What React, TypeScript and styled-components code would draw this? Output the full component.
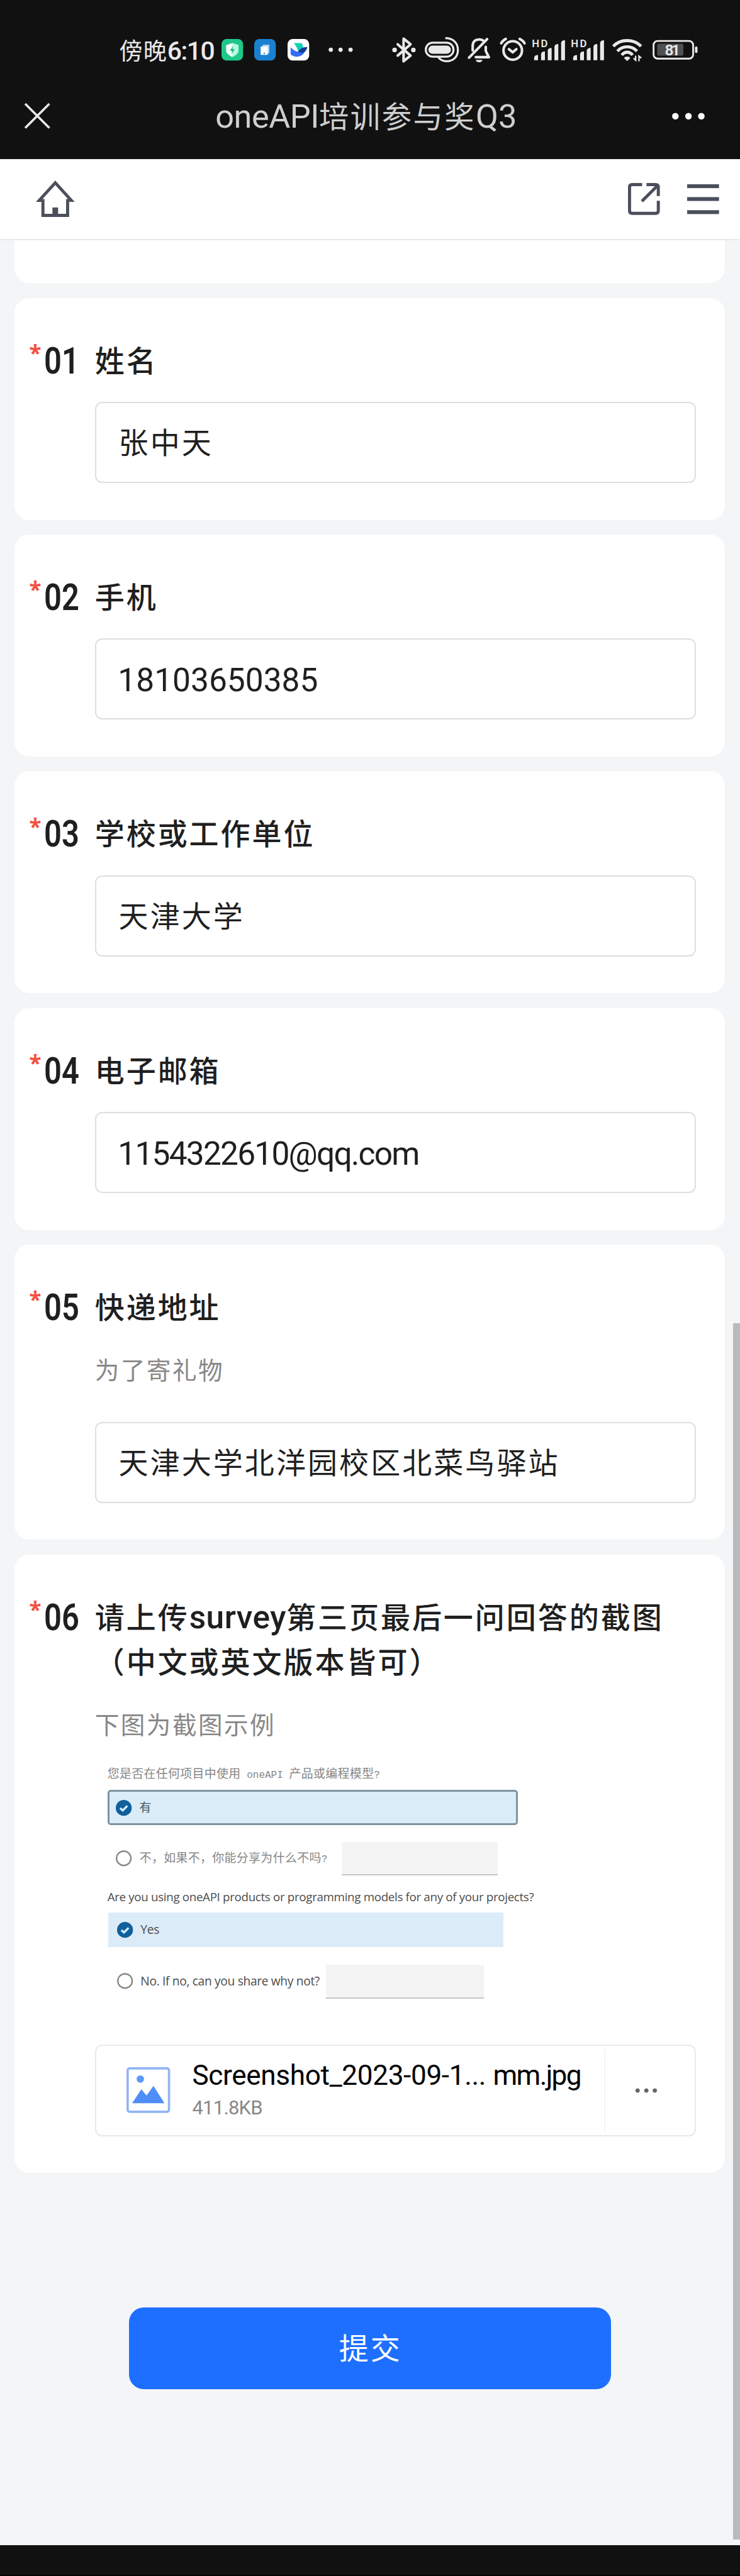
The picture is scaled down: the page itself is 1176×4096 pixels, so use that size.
import React from "react";
import styled, { createGlobalStyle, css } from "styled-components";

const SCALE = 0.8168;
const s = (n: number) => `${Math.round(n * SCALE * 100) / 100}px`;

const CJK = `"Noto Sans CJK SC", sans-serif`;
const LATIN = `Roboto, "Noto Sans CJK SC", sans-serif`;

const GlobalStyle = createGlobalStyle`
  * { box-sizing: border-box; }
  html, body { margin: 0; padding: 0; background: #f3f5f7; }
  body { font-family: ${CJK}; overflow: hidden; }
`;

const Screen = styled.div`
  position: relative;
  width: 1176px;
  height: 4096px;
  overflow: hidden;
  display: flex;
  flex-direction: column;
  background: #f3f5f7;
`;

/* ---------- system area ---------- */

const SystemArea = styled.header`
  flex: none;
  height: ${s(310)};
  background: #111111;
  display: flex;
  flex-direction: column;
`;

const StatusBar = styled.div`
  height: ${s(50)};
  margin-top: ${s(72)};
  padding: 0 ${s(82)} 0 ${s(232)};
  display: flex;
  align-items: center;
`;

const Clock = styled.div`
  width: ${s(199)};
  flex: none;
  color: #e9e9e9;
  font-size: ${s(45.5)};
  line-height: ${s(50)};
  letter-spacing: ${s(1.2)};
  white-space: nowrap;
`;

const Latin = styled.span<{ $size: number; $track?: number; $weight?: number }>`
  font-family: ${LATIN};
  font-size: ${(p) => s(p.$size)};
  line-height: 0;
  letter-spacing: ${(p) => s(p.$track ?? 0)};
  font-weight: ${(p) => p.$weight ?? 400};
`;

const Icon = styled.svg<{ $w: number; $h: number; $ml?: number }>`
  flex: none;
  display: block;
  width: ${(p) => s(p.$w)};
  height: ${(p) => s(p.$h)};
  margin-left: ${(p) => s(p.$ml ?? 0)};
  overflow: visible;
`;

const Spacer = styled.div`
  flex: 1;
`;

const TitleBar = styled.div`
  height: ${s(80)};
  margin-top: ${s(61.5)};
  padding: 0 ${s(68)} 0 ${s(46)};
  display: grid;
  grid-template-columns: ${s(120)} 1fr ${s(120)};
  align-items: center;
`;

const PageTitle = styled.h1`
  margin: 0;
  padding: 0 0 ${s(5)} ${s(7)};
  text-align: center;
  white-space: nowrap;
  font-weight: 400;
  color: #cfcfcf;
  font-size: ${s(58)};
  line-height: ${s(80)};
  letter-spacing: ${s(3)};
`;

const EndSlot = styled.div`
  display: flex;
  justify-content: flex-end;
`;

/* ---------- site navigation ---------- */

const NavBar = styled.nav`
  flex: none;
  height: ${s(158)};
  background: #fff;
  border-bottom: ${s(2.8)} solid #e9e9e9;
  padding: 0 ${s(41)} 0 ${s(69)};
  display: flex;
  align-items: center;
`;

/* ---------- form ---------- */

const Form = styled.main`
  flex: none;
  padding: 0 ${s(29)} 0 ${s(28.5)};
  display: flex;
  flex-direction: column;
  gap: ${s(28.8)};
`;

const PreviousCard = styled.section`
  height: ${s(83.2)};
  background: #fff;
  border-radius: 0 0 ${s(28.8)} ${s(28.8)};
`;

const Card = styled.section`
  background: #fff;
  border-radius: ${s(28.8)};
  padding: ${s(77.4)} ${s(57)} ${s(71.6)} ${s(28.5)};
  display: grid;
  grid-template-columns: ${s(30)} ${s(97.5)} 1fr;
`;

const Required = styled.span`
  color: #f4503f;
  font-family: "Noto Sans", sans-serif;
  font-weight: 700;
  font-size: ${s(43)};
  line-height: ${s(58)};
`;

const Ordinal = styled.span`
  font-family: ${LATIN};
  font-weight: 600;
  font-size: ${s(73)};
  line-height: ${s(86.4)};
  color: #1f1f1f;
  transform: scaleX(0.82);
  transform-origin: 0 50%;
  padding-top: ${s(2)};
  margin-left: ${s(-1.5)};
`;

const Content = styled.div`
  min-width: 0;
  display: flex;
  flex-direction: column;
`;

const Question = styled.h2`
  margin: ${s(-1.5)} 0 ${s(1.5)};
  font-weight: 500;
  color: #1f1f1f;
  font-size: ${s(57.6)};
  line-height: ${s(86.4)};
  letter-spacing: ${s(3.6)};
`;

const Hint = styled.p`
  margin: ${s(43.2)} 0 ${s(0.7)};
  color: #888;
  font-size: ${s(47.3)};
  line-height: ${s(70)};
  letter-spacing: ${s(3)};
`;

const Field = styled.div<{ $latin?: boolean; $gap: number; $track?: number }>`
  height: ${s(158)};
  margin-top: ${(p) => s(p.$gap)};
  border: ${s(2.8)} solid #dfdfdf;
  border-radius: ${s(14)};
  padding: 0 ${s(44)} ${s(7)};
  display: flex;
  align-items: center;
  white-space: nowrap;
  color: #1f1f1f;
  font-size: ${s(57.6)};
  letter-spacing: ${s(3.7)};
  line-height: 1;
  ${(p) =>
    p.$latin &&
    css`
      font-family: ${LATIN};
      font-size: ${s(63)};
      letter-spacing: ${s(p.$track ?? 0)};
      padding: ${s(5)} ${s(42.5)} 0;
    `}
`;

/* ---------- sample picture ---------- */

const Sample = styled.figure`
  margin: 0 0 ${s(89.5)};
  padding-left: ${s(24.5)};
  display: flex;
  flex-direction: column;
  align-items: flex-start;
  color: #858585;
`;

const SampleCn = styled.div`
  margin: ${s(39.5)} 0 ${s(7.5)};
  font-size: ${s(23.2)};
  letter-spacing: ${s(0.4)};
  line-height: ${s(42)};
  white-space: pre;
`;

const SampleMono = styled.span`
  font-family: "Liberation Mono", monospace;
  letter-spacing: 0;
  font-size: ${s(19.6)};
`;

const SampleEn = styled.div`
  margin: ${s(22)} 0 ${s(10)};
  font-family: "Open Sans", sans-serif;
  color: #4c4c4c;
  font-size: ${s(23)};
  letter-spacing: ${s(-0.42)};
  line-height: ${s(40)};
  white-space: nowrap;
`;

const Option = styled.div<{ $w?: number; $h: number; $bg?: string; $outlined?: boolean; $mt?: number; $en?: boolean }>`
  width: ${(p) => (p.$w ? s(p.$w) : "auto")};
  height: ${(p) => s(p.$h)};
  margin-top: ${(p) => s(p.$mt ?? 0)};
  margin-left: ${(p) => s(p.$en ? 2 : 0)};
  padding-left: ${(p) => s(p.$outlined ? 12.5 : 16.5)};
  background: ${(p) => p.$bg ?? "transparent"};
  border: ${(p) => (p.$outlined ? `${s(4)} solid #7d93a1` : "none")};
  border-radius: ${(p) => (p.$outlined ? s(6) : 0)};
  display: flex;
  align-items: center;
  white-space: nowrap;
  font-family: ${(p) => (p.$en ? `"Open Sans", sans-serif` : CJK)};
  font-size: ${(p) => s(p.$en ? 23.5 : 23.2)};
  letter-spacing: ${(p) => s(p.$en ? -0.4 : 0.4)};
  color: ${(p) => (p.$en ? "#4c4c4c" : p.$outlined ? "#3f5766" : "#858585")};
  line-height: 1;
`;

const OptionLabel = styled.span<{ $w?: number }>`
  margin-left: ${s(15)};
  padding-bottom: ${s(3)};
  flex: none;
  width: ${(p) => (p.$w ? s(p.$w) : "auto")};
`;

const Blank = styled.span<{ $w: number }>`
  width: ${(p) => s(p.$w)};
  height: 100%;
  background: #f4f4f4;
  border-bottom: ${s(3)} solid #c6c6c6;
`;

/* ---------- uploaded file ---------- */

const FileRow = styled.div`
  height: ${s(178.7)};
  border: ${s(2.8)} solid #e9e9e9;
  border-radius: ${s(14)};
  padding-left: ${s(59)};
  display: flex;
  align-items: center;
`;

const FileText = styled.div`
  margin-left: ${s(43)};
  flex: 1;
  font-family: ${LATIN};
  white-space: nowrap;
`;

const FileName = styled.div`
  display: flex;
  gap: ${s(14)};
  color: #000;
  font-size: ${s(54)};
  line-height: ${s(68)};
`;

const Tracked = styled.span<{ $track: number }>`
  letter-spacing: ${(p) => s(p.$track)};
`;

const FileSize = styled.div`
  color: #888;
  font-size: ${s(38)};
  line-height: ${s(56)};
  letter-spacing: ${s(-0.9)};
`;

const FileMenu = styled.div`
  width: ${s(176)};
  height: ${s(161)};
  border-left: ${s(2.5)} solid #f3f3f3;
  padding-left: ${s(58.5)};
  display: flex;
  align-items: center;
`;

/* ---------- footer ---------- */

const Submit = styled.button`
  flex: none;
  align-self: center;
  margin-top: ${s(262.3)};
  width: ${s(936.8)};
  height: ${s(158.6)};
  border: 0;
  border-radius: ${s(28.8)};
  background: #1e6fff;
  color: #fff;
  font-family: ${CJK};
  font-size: ${s(57.6)};
  line-height: 1;
  letter-spacing: ${s(3.6)};
  padding: 0 0 ${s(9)} ${s(2)};
`;

const GestureBar = styled.footer`
  flex: none;
  margin-top: auto;
  height: ${s(59.5)};
  background: #111;
  border-bottom: ${s(3)} solid #000;
`;

const ScrollThumb = styled.div`
  position: absolute;
  right: 0;
  top: ${s(2576)};
  width: ${s(14)};
  height: ${s(2368)};
  background: #b9babc;
`;

/* ---------- drawings ---------- */

const light = "#e9e9e9";

const Dots = ({ w, h, xs, r, fill, ml }: { w: number; h: number; xs: number[]; r: number; fill: string; ml?: number }) => (
  <Icon $w={w} $h={h} $ml={ml} viewBox={`0 0 ${w} ${h}`}>
    {xs.map((x) => (
      <circle key={x} cx={x} cy={h / 2} r={r} fill={fill} />
    ))}
  </Icon>
);

const ShieldApp = () => (
  <Icon $w={42} $h={42} viewBox="0 0 42 42">
    <rect width="42" height="42" rx="10" fill="#1fc88a" />
    <path d="M21 8 L33 12 V22 C33 28 27 32 21 35 C15 32 9 28 9 22 V12 Z" fill="#fff" />
    <path d="M21 8 L33 12 V22 C33 28 27 32 21 35 Z" fill="#b5fbe0" />
    <path d="M22.5 14 L16 23 H20.5 L19.5 29 L26 20 H21.5 Z" fill="#1fb57e" />
  </Icon>
);

const PhonesApp = () => (
  <Icon $w={42} $h={42} $ml={22} viewBox="0 0 42 42">
    <rect width="42" height="42" rx="10" fill="#1c80d0" />
    <rect x="16.5" y="11" width="13" height="17" rx="1.5" fill="#a9cff0" />
    <rect x="12.5" y="14.5" width="14" height="16.5" rx="1.5" fill="#fff" />
    <circle cx="19.5" cy="28" r="1.3" fill="#1c60a0" />
  </Icon>
);

const BirdApp = () => (
  <Icon $w={42} $h={42} $ml={22} viewBox="0 0 42 42">
    <rect width="42" height="42" rx="10" fill="#fff" />
    <path d="M12 8 H27 C29 10 30 13 30.5 16 L21 25 C19 18 16 12 12 8 Z" fill="#12d0b4" />
    <path d="M6 16 C12 23 19 26 27 25 L34 24 C31 31 25 34.500 18 34.500 C13 34.500 9 32.500 6 30 Z" fill="#336df4" />
    <path d="M20 25 C24 20 29 14 39 16.500 C36 20 36 26 29 26.500 C26 26.500 23 26 20 25 Z" fill="#133c9a" />
  </Icon>
);

const Bluetooth = () => (
  <Icon $w={46} $h={50} viewBox="763 72 46 50" fill="none" stroke={light} strokeWidth="5" strokeLinejoin="round" strokeLinecap="round">
    <path d="M774 86 L799 108 L785.500 119 V75 L799 86 L774 108" />
    <circle cx="768" cy="97" r="2" fill={light} />
    <circle cx="804.500" cy="97" r="2" fill={light} />
  </Icon>
);

const Earbuds = () => (
  <Icon $w={67} $h={50} $ml={17} viewBox="826 72 67 50" fill="none" stroke={light} strokeWidth="4">
    <rect x="828" y="83" width="54" height="27" rx="13.500" />
    <rect x="833" y="88.500" width="44" height="16" rx="8" fill={light} stroke="none" />
    <path d="M866 74 C882 74 890.500 84 890.500 97 C890.500 110 882 119 868 119 C861 119 856 116 852 111" />
  </Icon>
);

const Muted = () => (
  <Icon $w={45} $h={50} $ml={17} viewBox="910 72 45 50" fill="none" stroke={light} strokeWidth="5" strokeLinecap="round">
    <path d="M920 98 V89 C920 80 926 76.500 933 76.500 C937 76.500 940 78 941.500 80" />
    <path d="M913 112 L948 76" />
    <path d="M945.500 91 V99 L951.500 111 H926" strokeLinejoin="round" />
    <path d="M926 116.500 H939 C938 120 936 121 932.500 121 C929 121 927 120 926 116.500 Z" fill={light} stroke="none" />
  </Icon>
);

const Alarm = () => (
  <Icon $w={51} $h={50} $ml={17} viewBox="972 72 51 50" fill="none" stroke={light} strokeWidth="5" strokeLinecap="round">
    <circle cx="997.500" cy="98" r="18" />
    <path d="M990 95.500 L997.500 101.500 L1004.500 95.500" strokeLinejoin="round" />
    <path d="M975 84 C977 80 980 77.500 984 75.500 M1020.500 84 C1018.500 80 1015 77.500 1011 75.500" />
  </Icon>
);

const Signal = ({ ml }: { ml: number }) => (
  <Icon $w={64} $h={50} $ml={ml} viewBox="1035.500 72 64 50">
    <text x="1034.500" y="91.500" fontFamily="Roboto, sans-serif" fontWeight="600" fontSize="20.500" textLength="31" fill={light}>
      HD
    </text>
    {[
      [1039, 107],
      [1052.5, 100],
      [1065.5, 93],
      [1078.5, 85.5],
      [1091.5, 78],
    ].map(([x, y]) => (
      <path key={x} d={`M${x} 117 V${y + 5} C${x + 1} ${y + 1} ${x + 4} ${y} ${x + 7.5} ${y} V117 Z`} fill={light} />
    ))}
  </Icon>
);

const Wifi = () => (
  <Icon $w={58} $h={50} $ml={16} viewBox="1192 72 58 50" fill="none" stroke={light} strokeWidth="6">
    <path d="M1194 90 C1208 75 1234 75 1248 90" />
    <path d="M1202 99.500 C1212 88 1230 88 1240 99.500" />
    <path d="M1210.500 107 C1216 99.500 1226 99.500 1231.500 107" />
    <path d="M1215 113 C1216 109 1226 109 1227 113 L1221 118.500 Z" fill={light} stroke="none" />
    <path d="M1237.500 108 V117 L1233.500 113 M1244 119 V109 L1248.500 113" strokeWidth="2.800" />
  </Icon>
);

const Battery = () => (
  <Icon $w={88} $h={50} $ml={20} viewBox="1269 72 88 50">
    <rect x="1271" y="79.500" width="77" height="34.500" rx="8" fill="none" stroke={light} strokeWidth="3.500" />
    <rect x="1278" y="85" width="51" height="23" rx="3" fill="#505050" />
    <rect x="1351.500" y="90" width="5" height="13" rx="2.500" fill={light} />
    <text x="1308" y="107.500" textAnchor="middle" fontFamily="Roboto, sans-serif" fontWeight="600" fontSize="30" textLength="30" fill={light}>
      81
    </text>
  </Icon>
);

const Close = () => (
  <Icon $w={52} $h={52} viewBox="0 0 52 52" stroke="#e9e9e9" strokeWidth="4.500">
    <path d="M2.500 2.500 L49.500 49.500 M49.500 2.500 L2.500 49.500" />
  </Icon>
);

const ink = "#4b4f5b";

const Home = () => (
  <Icon $w={78} $h={72} viewBox="69 353 78 72" fill="none" stroke={ink} strokeWidth="6">
    <path d="M84 389 V421 H132 V389" />
    <path d="M134.500 391.500 H139 L108 357.500 L77 391.500 H81.500" strokeLinejoin="miter" strokeMiterlimit="3" />
    <rect x="102.500" y="405.500" width="11" height="14" fill={ink} stroke="none" />
  </Icon>
);

const OpenExternal = () => (
  <Icon $w={62} $h={62} viewBox="1222 357 62 62" fill="none" stroke={ink} strokeWidth="6">
    <path d="M1249.500 360 H1230 Q1225 360 1225 365 V411 Q1225 416 1230 416 H1276 Q1281 416 1281 411 V391.500" />
    <path d="M1258 360 H1276 Q1281 360 1281 365 V382.500" />
    <path d="M1249 392.500 L1280 361.500" />
  </Icon>
);

const Menu = () => (
  <Icon $w={62} $h={58} $ml={53} viewBox="0 0 62 58" fill={ink}>
    <rect width="62" height="7.500" />
    <rect y="25" width="62" height="7.500" />
    <rect y="50.500" width="62" height="7.500" />
  </Icon>
);

const PictureFile = () => (
  <Icon $w={85} $h={89} viewBox="246 4023 85 89">
    <rect x="248.250" y="4025.250" width="80.500" height="84.500" rx="4" fill="#fff" stroke="#92b4f5" strokeWidth="4.500" />
    <circle cx="273" cy="4046" r="7.200" fill="#5c98fb" />
    <path d="M257 4093 L275 4066 L285 4078 L298.500 4059.500 L320 4093 Z" fill="#4f8ef7" />
  </Icon>
);

const Checked = () => (
  <Icon $w={31} $h={31} viewBox="0 0 31 31">
    <circle cx="15.500" cy="15.500" r="15.500" fill="#10609c" />
    <path d="M8.500 16 L13.500 20.500 L22.500 11.500" fill="none" stroke="#d5efff" strokeWidth="4" />
  </Icon>
);

const Unchecked = () => (
  <Icon $w={31} $h={31} viewBox="0 0 31 31">
    <circle cx="15.500" cy="14.500" r="14" fill="#fff" stroke="#8a8a8a" strokeWidth="3" />
  </Icon>
);

/* ---------- page ---------- */

type Entry = { no: string; title: string; value: string; hint?: string; latin?: boolean; track?: number };

const entries: Entry[] = [
  { no: "01", title: "姓名", value: "张中天" },
  { no: "02", title: "手机", value: "18103650385", latin: true, track: 0 },
  { no: "03", title: "学校或工作单位", value: "天津大学" },
  { no: "04", title: "电子邮箱", value: "1154322610@qq.com", latin: true, track: -2.2 },
  { no: "05", title: "快递地址", value: "天津大学北洋园校区北菜鸟驿站", hint: "为了寄礼物" },
];

export default function App() {
  return (
    <Screen>
      <GlobalStyle />
      <SystemArea>
        <StatusBar>
          <Clock>
            傍晚<Latin $size={50} $track={-1.8} $weight={500}>6:10</Latin>
          </Clock>
          <ShieldApp />
          <PhonesApp />
          <BirdApp />
          <Dots w={48} h={10} xs={[4.5, 23.5, 43]} r={4.2} fill={light} ml={38} />
          <Spacer />
          <Bluetooth />
          <Earbuds />
          <Muted />
          <Alarm />
          <Signal ml={12.5} />
          <Signal ml={12.5} />
          <Wifi />
          <Battery />
        </StatusBar>
        <TitleBar>
          <Close />
          <PageTitle>
            <Latin $size={64} $track={-0.6}>oneAPI</Latin>培训参与奖<Latin $size={64}>Q3</Latin>
          </PageTitle>
          <EndSlot>
            <Dots w={64} h={14} xs={[6.5, 32, 57]} r={6.4} fill="#fff" />
          </EndSlot>
        </TitleBar>
      </SystemArea>

      <NavBar>
        <Home />
        <Spacer />
        <OpenExternal />
        <Menu />
      </NavBar>

      <Form>
        <PreviousCard />
        {entries.map((e) => (
          <Card key={e.no}>
            <Required>*</Required>
            <Ordinal>{e.no}</Ordinal>
            <Content>
              <Question>{e.title}</Question>
              {e.hint && <Hint>{e.hint}</Hint>}
              <Field $latin={e.latin} $track={e.track} $gap={e.hint ? 67.5 : 38.6}>
                {e.value}
              </Field>
            </Content>
          </Card>
        ))}
        <Card>
          <Required>*</Required>
          <Ordinal>06</Ordinal>
          <Content>
            <Question>
              请上传<Latin $size={63} $track={0.6} $weight={500}>survey</Latin>第三页最后一问回答的截图
              <br />
              （中文或英文版本皆可）
            </Question>
            <Hint>下图为截图示例</Hint>
            <Sample>
              <SampleCn>
                您是否在任何项目中使用<SampleMono> oneAPI </SampleMono>产品或编程模型<SampleMono>?</SampleMono>
              </SampleCn>
              <Option $w={799} $h={69} $bg="#daecf8" $outlined>
                <Checked />
                <OptionLabel>有</OptionLabel>
              </Option>
              <Option $h={66} $mt={32}>
                <Unchecked />
                <OptionLabel $w={393}>不，如果不，你能分享为什么不吗<SampleMono>?</SampleMono></OptionLabel>
                <Blank $w={304} />
              </Option>
              <SampleEn>Are you using oneAPI products or programming models for any of your projects?</SampleEn>
              <Option $w={769} $h={67} $bg="#dcebf8" $en>
                <Checked />
                <OptionLabel>Yes</OptionLabel>
              </Option>
              <Option $h={66} $mt={34} $en>
                <Unchecked />
                <OptionLabel $w={361}>No. If no, can you share why not?</OptionLabel>
                <Blank $w={307} />
              </Option>
            </Sample>
            <FileRow>
              <PictureFile />
              <FileText>
                <FileName>
                  <Tracked $track={-0.4}>Screenshot_2023-09-1...</Tracked>
                  <Tracked $track={-2}>mm.jpg</Tracked>
                </FileName>
                <FileSize>411.8KB</FileSize>
              </FileText>
              <FileMenu>
                <Dots w={42} h={10} xs={[4, 21, 37.5]} r={4.2} fill="#666" />
              </FileMenu>
            </FileRow>
          </Content>
        </Card>
      </Form>

      <Submit>提交</Submit>
      <GestureBar />
      <ScrollThumb />
    </Screen>
  );
}
